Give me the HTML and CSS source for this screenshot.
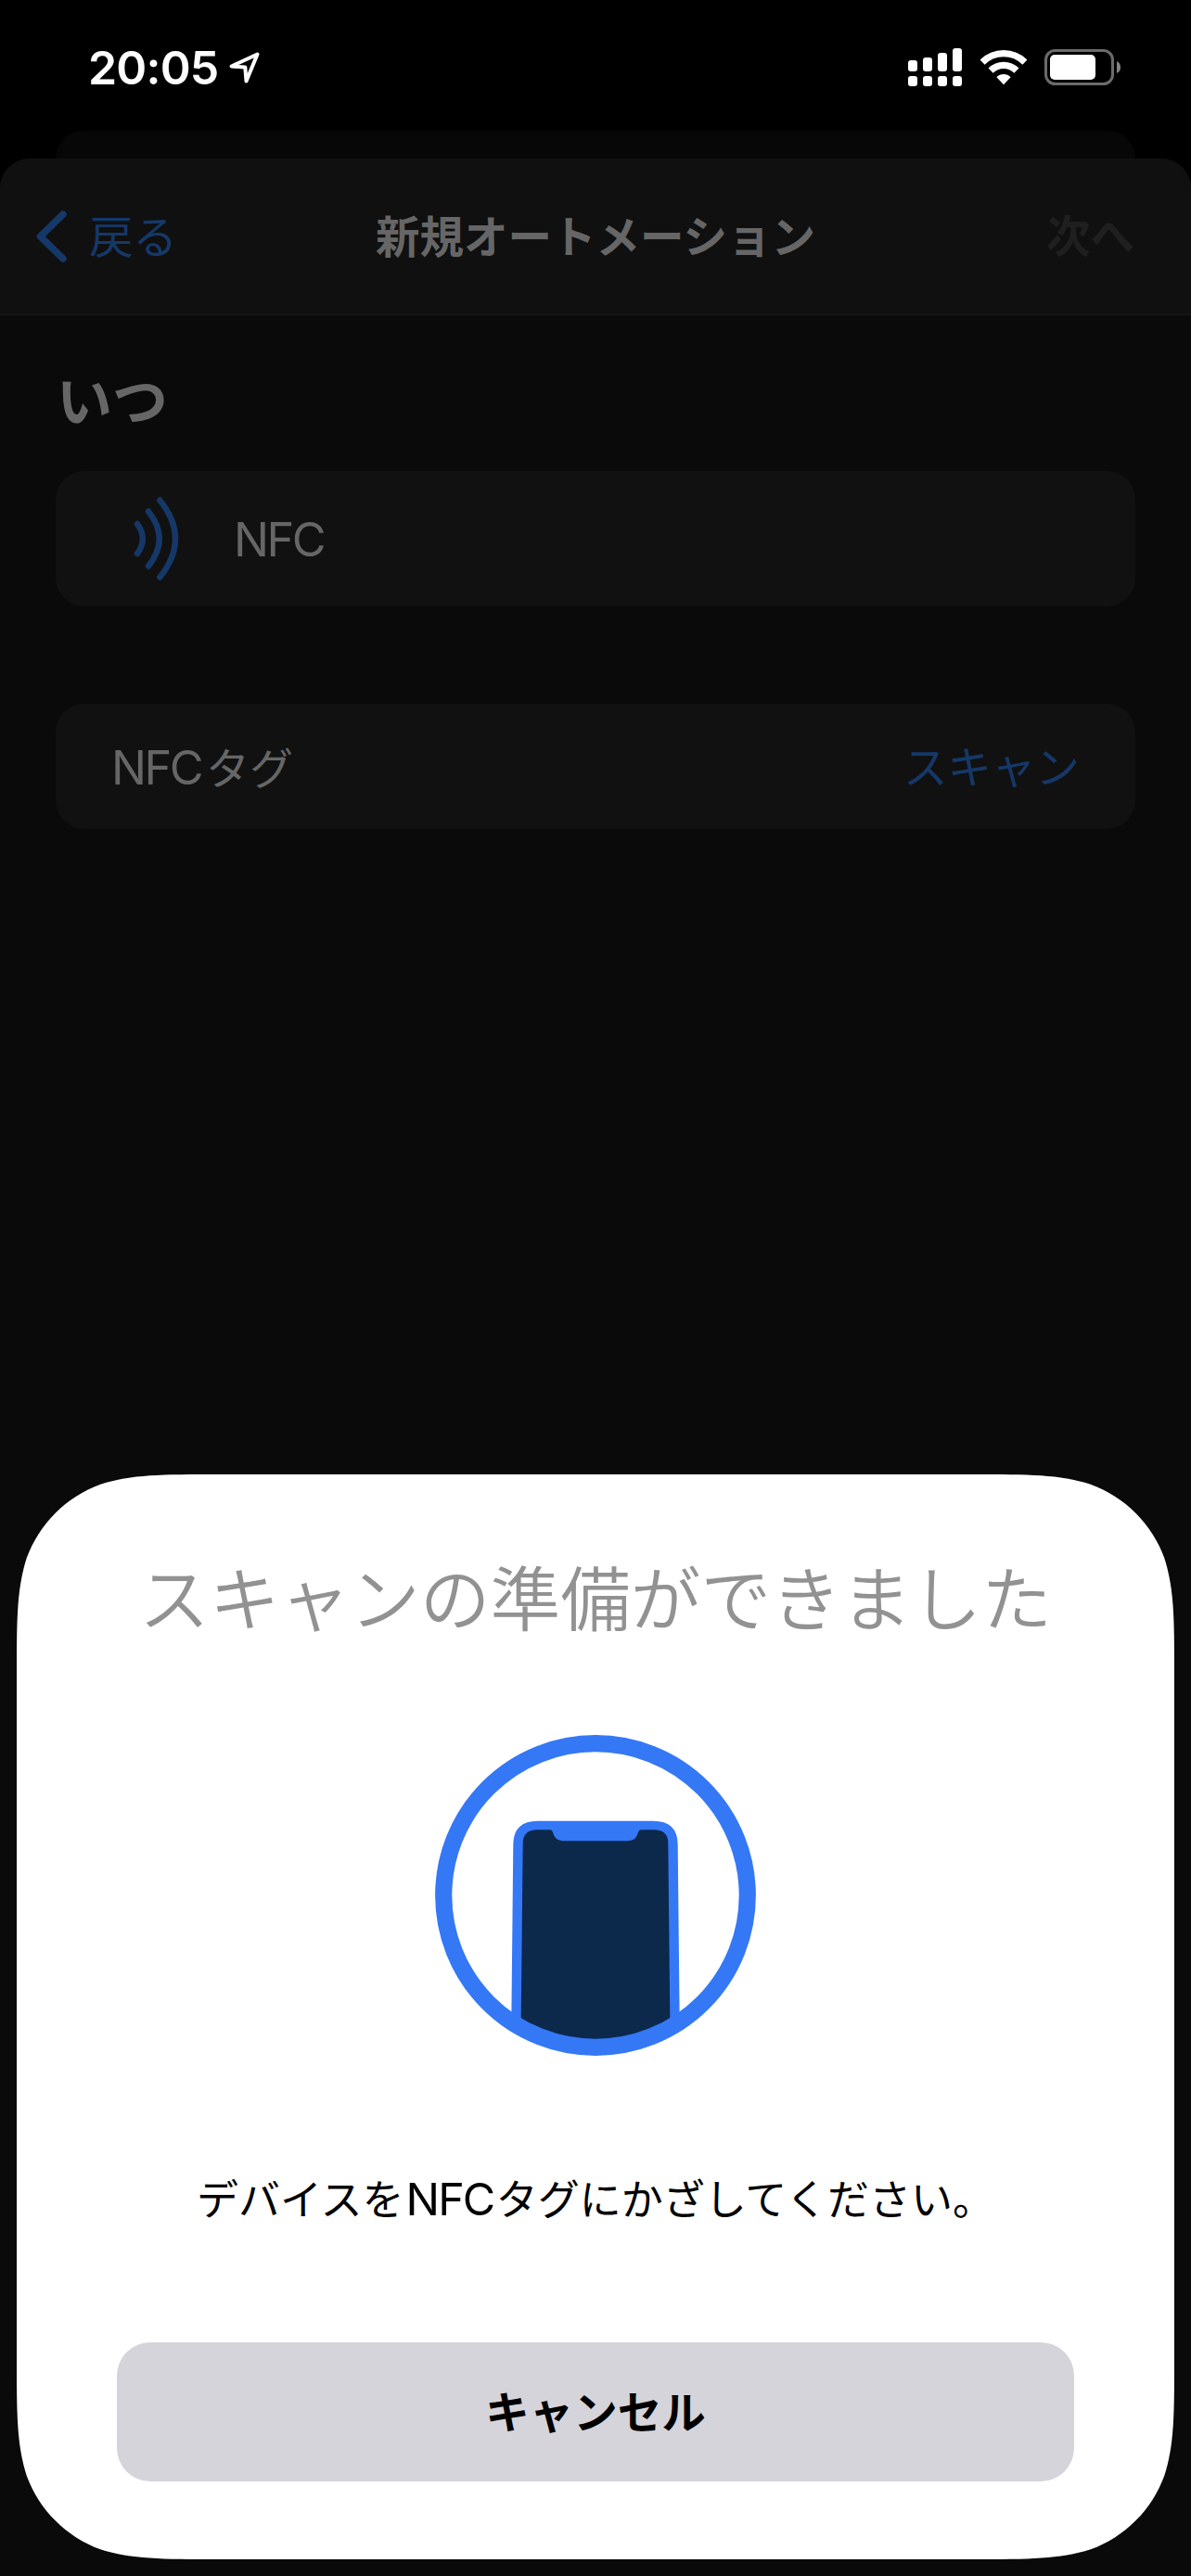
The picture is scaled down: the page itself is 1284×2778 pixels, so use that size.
FILE: index.html
```html
<!DOCTYPE html>
<html lang="ja">
<head>
<meta charset="utf-8">
<title>新規オートメーション</title>
<link rel="stylesheet" href="styles.css">
</head>
<body>
<header class="status">
  <div class="status-left">
    <span class="clock">20:05</span>
    <svg class="location" width="36" height="38" viewBox="0 0 36 38"><path d="M3.5 17.5 L31.5 4.5 L19.5 33.5 L18.3 18.5 Z" fill="none" stroke="#fff" stroke-width="4" stroke-linejoin="round"/></svg>
  </div>
  <div class="status-right">
    <svg width="58" height="41" viewBox="0 0 58 41" fill="#fff">
      <rect x="0" y="13" width="10" height="12" rx="3"/><rect x="16" y="10" width="10" height="15" rx="3"/><rect x="32" y="5" width="10" height="20" rx="3"/><rect x="48" y="0" width="10" height="25" rx="3"/>
      <rect x="0" y="30" width="10" height="11" rx="3"/><rect x="16" y="30" width="10" height="11" rx="3"/><rect x="32" y="30" width="10" height="11" rx="3"/><rect x="48" y="30" width="10" height="11" rx="3"/>
    </svg>
    <svg class="wifi" width="52" height="41" viewBox="0 0 52 41" fill="none" stroke="#fff" stroke-width="7.2">
      <path d="M3.1 15.1 A32.4 32.4 0 0 1 48.9 15.1"/>
      <path d="M12.1 24.1 A19.65 19.65 0 0 1 39.9 24.1"/>
      <path d="M26 39.2 L18.4 31.2 A10.6 10.6 0 0 1 33.6 31.2 Z" fill="#fff" stroke="none"/>
    </svg>
    <svg class="battery" width="82" height="41" viewBox="0 0 82 41">
      <rect x="1.5" y="2.5" width="72" height="36" rx="10" fill="none" stroke="#6b6b6b" stroke-width="3"/>
      <rect x="6" y="7" width="49" height="27" rx="5" fill="#fff"/>
      <path d="M78 14 Q82 16 82 20.5 Q82 25 78 27 Z" fill="#858585"/>
    </svg>
  </div>
</header>
<div class="peek"></div>
<main class="app">
  <nav class="nav">
    <div class="back">
      <svg width="34" height="58" viewBox="0 0 34 58"><path d="M29 5 L4.5 29 L29 53" fill="none" stroke="#153868" stroke-width="7.5" stroke-linecap="round" stroke-linejoin="round"/></svg>
      <span class="back-label">戻る</span>
    </div>
    <h1 class="nav-title">新規オートメーション</h1>
    <span class="next">次へ</span>
  </nav>
  <section class="form">
    <h2 class="heading">いつ</h2>
    <div class="card trigger">
      <svg width="50" height="90" viewBox="0 0 50 90" fill="none" stroke="#153868" stroke-width="6.4" stroke-linecap="round">
        <path d="M4 29 Q15.6 45 4 61"/>
        <path d="M16 15.5 Q39.6 45 16 74.5"/>
        <path d="M28.3 3.5 Q61.7 45 28.3 86.5"/>
      </svg>
      <span class="label">NFC</span>
    </div>
    <div class="card tag">
      <span class="label">NFC<span class="kana">タグ</span></span>
      <span class="scan">スキャン</span>
    </div>
  </section>
  <section class="dialog">
    <h2 class="dialog-title">スキャンの準備ができました</h2>
    <svg class="scan-art" width="348" height="348" viewBox="0 0 348 348">
      <defs><clipPath id="ring"><circle cx="174" cy="174" r="160"/></clipPath></defs>
      <g clip-path="url(#ring)">
        <path d="M83 340 L85.3 119 Q85.5 93.7 112 93.7 L236 93.7 Q262.5 93.7 262.7 119 L265 340 Z" fill="#3478f6"/>
        <path d="M93.3 340 L95.7 118 Q95.7 103.3 111 103.3 L125 103.3 Q127.5 103.3 128 106 Q130 115 139 115.2 L209 115.2 Q218 115 220 106 Q220.5 103.3 223 103.3 L237 103.3 Q252.3 103.3 252.3 118 L254.7 340 Z" fill="#0c284b"/>
      </g>
      <circle cx="174" cy="174" r="163.8" fill="none" stroke="#3478f6" stroke-width="18.2"/>
    </svg>
    <p class="message">デバイスを<span class="latin">NFC</span>タグにかざしてください。</p>
    <button class="cancel">キャンセル</button>
  </section>
</main>
</body>
</html>
```
FILE: styles.css
```css
* { box-sizing: border-box; }
html { background: #000; }
body {
  margin: 0;
  width: 1284px;
  height: 2778px;
  display: flex;
  flex-direction: column;
  overflow: hidden;
  background: #000;
  font-family: Inter, "Noto Sans CJK JP", sans-serif;
}
h1, h2, p { margin: 0; white-space: nowrap; }
svg { display: block; flex: none; }

.status {
  height: 141px;
  display: flex;
  justify-content: space-between;
  padding: 52px 76px 0 95px;
  color: #fff;
}
.status-left, .status-right { display: flex; align-items: flex-start; }
.status-left { gap: 10px; }
.clock { font-size: 50px; font-weight: 600; line-height: 42px; letter-spacing: -0.8px; }
.location { margin-top: 2px; }
.wifi { margin-left: 18.5px; }
.battery { margin-left: 18.5px; }

.peek {
  height: 60px;
  margin: 0 60px -30px;
  border-radius: 30px 30px 0 0;
  background: #070707;
}

.app {
  flex: 1;
  display: flex;
  flex-direction: column;
  background: #0a0a0a;
  border-radius: 32px 32px 0 0;
  overflow: hidden;
  position: relative;
}
.nav {
  height: 169px;
  flex: none;
  display: grid;
  grid-template-columns: 1fr auto 1fr;
  align-items: center;
  padding: 0 39px 0 39px;
  background: #101010;
  border-bottom: 1px solid #1a1a1a;
}
.back { display: flex; align-items: center; gap: 23px; color: #153868; }
.back-label { font-size: 47.5px; line-height: 60px; padding-top: 1px; }
.nav-title { font-size: 47.5px; font-weight: 600; line-height: 60px; padding-top: 1px; color: #666; }
.next { justify-self: end; margin-right: 22px; font-size: 47.5px; font-weight: 600; line-height: 60px; color: #1f1f1f; }

.form { padding: 58px 60px 0; }
.heading { padding-left: 1px; font-size: 60px; font-weight: 600; line-height: 70px; color: #666; }
.card {
  display: flex;
  align-items: center;
  background: #111;
  border-radius: 31px;
}
.trigger { margin-top: 40px; height: 146px; padding: 0 84px; gap: 58px; }
.tag { margin-top: 105px; height: 135px; padding: 3px 60px 0; justify-content: space-between; }
.label { font-size: 50.5px; line-height: 60px; letter-spacing: -2.6px; color: #666; }
.trigger .label { padding-top: 2px; }
.kana { margin-left: 5px; font-size: 47px; letter-spacing: 0; }
.scan { font-size: 47.5px; line-height: 60px; color: #153868; }

.dialog {
  margin: auto 18px 18px;
  height: 1170px;
  display: flex;
  flex-direction: column;
  align-items: center;
  background: #fff;
  color: #000;
  /* continuous-curvature corners, 143px nominal radius */
  clip-path: path("M218.6 0 L1029.4 0 C1092.3 0 1123.8 0 1157.7 10.7 C1194.7 24.2 1223.8 53.3 1237.3 90.3 C1248 124.2 1248 155.7 1248 218.6 L1248 951.4 C1248 1014.3 1248 1045.8 1237.3 1079.7 C1223.8 1116.7 1194.7 1145.8 1157.7 1159.3 C1123.8 1170 1092.3 1170 1029.4 1170 L218.6 1170 C155.7 1170 124.2 1170 90.3 1159.3 C53.3 1145.8 24.2 1116.7 10.7 1079.7 C0 1045.8 0 1014.3 0 951.4 L0 218.6 C0 155.7 0 124.2 10.7 90.3 C24.2 53.3 53.3 24.2 90.3 10.7 C124.2 0 155.7 0 218.6 0 Z");
}
.dialog-title { margin-top: 86px; font-size: 75.7px; font-weight: 350; line-height: 100px; color: #929292; }
.scan-art { margin-top: 94px; }
.message { margin-top: 119px; font-size: 45px; line-height: 70px; }
.latin { margin: 0 2.5px 0 2px; font-size: 48.5px; letter-spacing: -2px; }
.cancel {
  margin: auto 0 84px;
  width: 1032px;
  height: 150px;
  padding: 2px 0 0;
  border: 0;
  border-radius: 36px;
  background: #d5d4da;
  color: #000;
  font: 600 47.5px/60px Inter, "Noto Sans CJK JP", sans-serif;
}
```
